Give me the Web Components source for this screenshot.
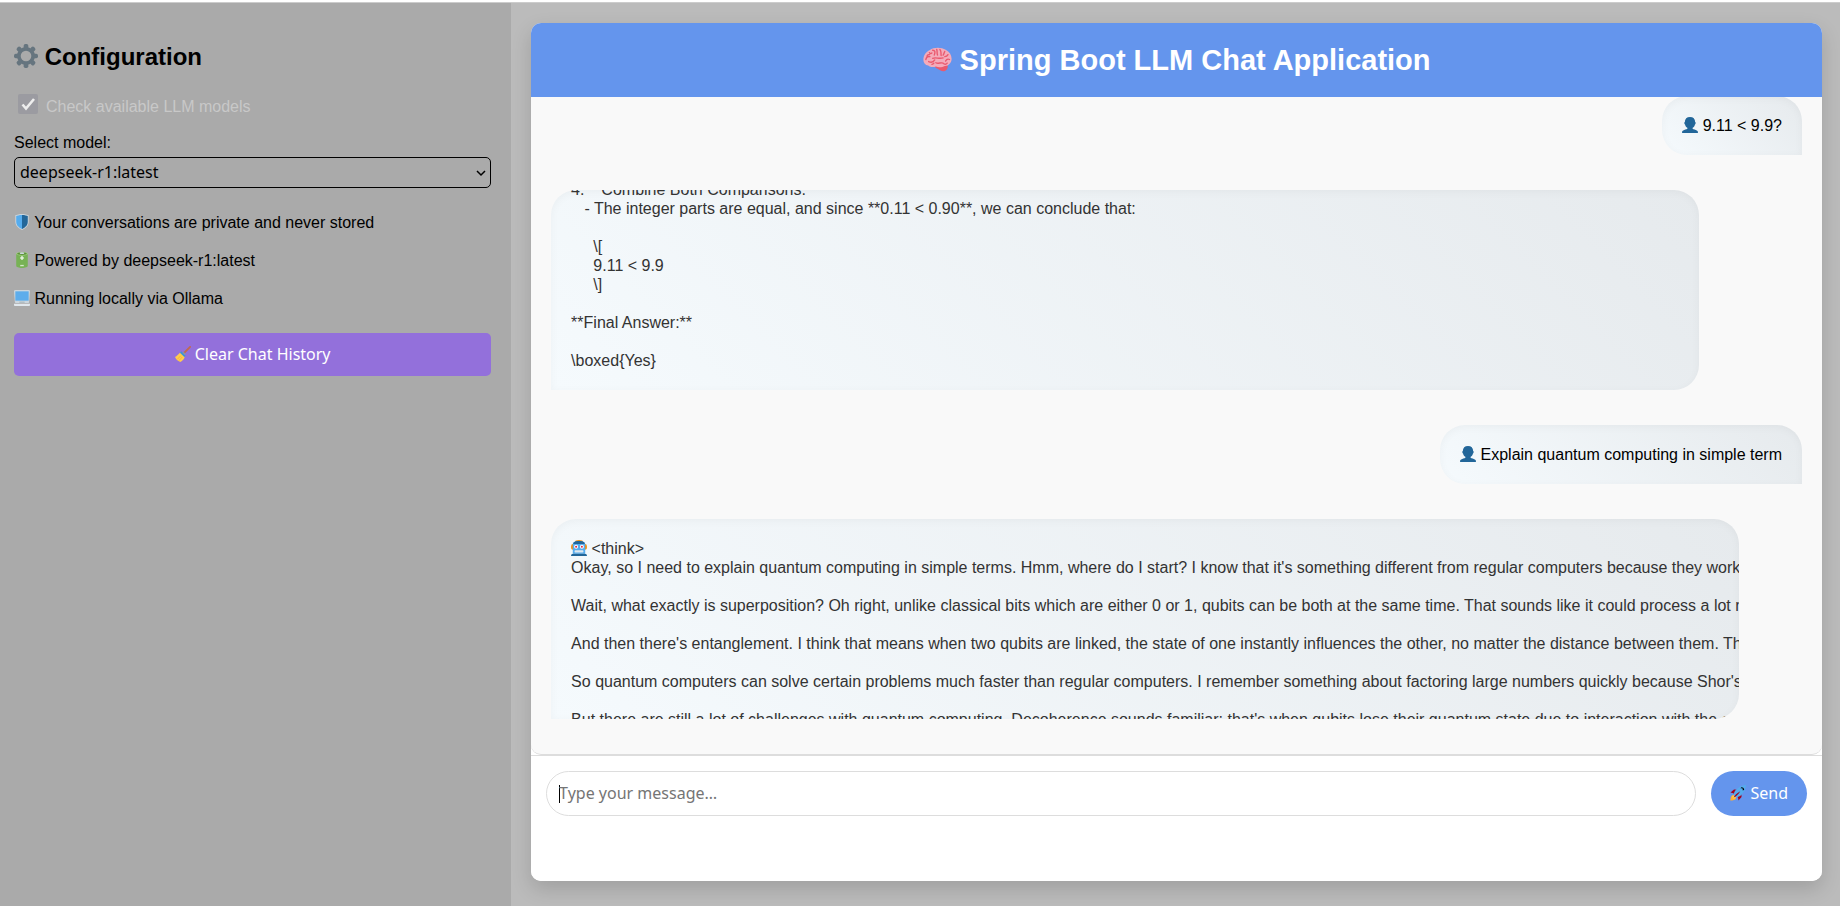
<!DOCTYPE html>
<html lang="en">
<head>
<meta charset="utf-8">
<title>Spring Boot LLM Chat Application</title>
<style>
  html, body { height: 100%; }
  body {
    margin: 0;
    background: #fff;
    color: #000;
    font: 16px/19px "Liberation Sans", Arial, sans-serif;
    overflow: hidden;
  }
</style>
</head>
<body>
<chat-app>
  <config-sidebar slot="sidebar"></config-sidebar>
  <chat-window>
    <chat-message from="user"><emoji-icon name="person"></emoji-icon> 9.11 &lt; 9.9?</chat-message>
    <chat-message from="bot" narrow at-end>4. **Combine Both Comparisons:**
   - The integer parts are equal, and since **0.11 &lt; 0.90**, we can conclude that:

     \[
     9.11 &lt; 9.9
     \]

**Final Answer:**

\boxed{Yes}</chat-message>
    <chat-message from="user"><emoji-icon name="person"></emoji-icon> Explain quantum computing in simple term</chat-message>
    <chat-message from="bot"><emoji-icon name="robot"></emoji-icon> &lt;think&gt;
Okay, so I need to explain quantum computing in simple terms. Hmm, where do I start? I know that it's something different from regular computers because they work with

Wait, what exactly is superposition? Oh right, unlike classical bits which are either 0 or 1, qubits can be both at the same time. That sounds like it could process a lot more

And then there's entanglement. I think that means when two qubits are linked, the state of one instantly influences the other, no matter the distance between them. That

So quantum computers can solve certain problems much faster than regular computers. I remember something about factoring large numbers quickly because Shor's algorithm

But there are still a lot of challenges with quantum computing. Decoherence sounds familiar; that's when qubits lose their quantum state due to interaction with the environment.</chat-message>
  </chat-window>
</chat-app>

<script>
const UI_FONT = '"Noto Sans", "Open Sans", sans-serif';

const ICONS = {
  gear: `<g fill="#66757f"><circle cx="18" cy="18" r="13.500"/>
    ${[0,45,90,135,180,225,270,315].map(a => `<rect x="14.500" y="0" width="7" height="8" rx="2.600" transform="rotate(${a} 18 18)"/>`).join('')}</g>
    <circle cx="18" cy="18" r="8" fill="#aaa"/>`,
  brain: `<path fill="#ea596e" d="M29.9 23.3c-2 .5-8 2-12 2-3 0-4 1.800-1 3.700 3.600 2.200 6 4 9.500 3.500 3.500-.6 5.600-5 3.500-9.200z"/>
    <path fill="#f4abba" d="M35.500 17c-.1-4.300-2.600-8.600-7.400-11C23.500 2.700 13.500 2.200 8.500 6.200 3.500 8.500.5 13 .5 18.500c0 3.500 2.500 6.500 6 7 2.500 2 6 2.500 9.500 1.300 4 1.200 8 .8 11-.8 4.500.3 8.600-4 8.500-9z"/>
    <g fill="none" stroke="#ea596e" stroke-width="1.700" stroke-linecap="round"><path d="M3.500 18c1-4 3-4 5-3.500M8 9.500c1 1.500 2 1.500 3 .5M7 20.500c3 1.500 6 .5 7.500-2M12 6.500c3 0 3.500 2 2 6M17 5.500c1 2 0 4 1 7M21 5.500c2 2 1 4 1.500 7.500M27 8c-1 2-1 3-2 4.500M31 12c-1 2-2 2.500-4 2.500M33 18c-2-1-4 0-5 2M12 16.500c4-1.500 8 1 13-.5M16 22c3 2 6-1 9 .5M11 24c1.500 0 2-1 2.500-1.500M5 14.500c0-2 1-3 3-2.500M30 22.500c-1 1.500-3 1.500-4 1"/></g>`,
  shield: `<path fill="#ccd6dd" d="M33 3s-7-3-15-3S3 3 3 3v15c0 12 15 18 15 18s15-6 15-18z"/>
    <path fill="#55acee" d="M18 33.900C15 32.500 5 27.300 5 18V4.400C6.800 3.700 12 2 18 2z"/>
    <path fill="#226699" d="M18 33.900C21 32.500 31 27.300 31 18V4.400C29.200 3.700 24 2 18 2z"/>`,
  battery: `<path fill="#77b255" d="M5 4v27c0 3 6 5 13 5s13-2 13-5V4z"/><ellipse cx="18" cy="4" rx="13" ry="4" fill="#a6d388"/>
    <ellipse cx="18" cy="4" rx="11" ry="2.600" fill="#5c913b"/><ellipse cx="18" cy="2.700" rx="5" ry="2" fill="#ccd6dd"/>
    <path stroke="#fff" stroke-width="2.500" d="M18 9v9M13.500 13.500h9"/><path fill="#d4e7c8" d="M14 29h8v3h-8z"/>`,
  laptop: `<path fill="#ccd6dd" d="M34 27a2 2 0 0 1-2 2H4a2 2 0 0 1-2-2L0 3a3 3 0 0 1 3-3h30a3 3 0 0 1 3 3z"/>
    <rect x="3" y="3" width="30" height="21" fill="#5dadec"/><path fill="#aebbc1" d="M12 26h12v3H12z"/>
    <path fill="#e1e8ed" d="M0 31h36v3a2 2 0 0 1-2 2H2a2 2 0 0 1-2-2z"/>`,
  broom: `<path stroke="#c1694f" stroke-width="4" stroke-linecap="round" d="M34 2 18 18"/>
    <path fill="#ffcc4d" d="m12 14 10 10c-1 5-5 9-10 12C6 34 2 30 0 25c4-3 8-6 12-11z"/>
    <path fill="#3b94d9" d="m14 12 10 10-3 3L11 15z"/><path stroke="#8899a6" stroke-width="3" d="m18 14 5 5"/>
    <path stroke="#f19020" stroke-width="1" d="m5 30 8-8M9 33l7-8"/>`,
  person: `<path fill="#269" d="M24 26.800v-2.700c2.700-1.600 4.500-4.400 5.200-7.400 2-.3 2-5.100.4-5.200C29.600 4 25.300 0 18 0S6.400 4 6.400 11.500c-1.600.1-1.600 4.900.4 5.200.7 3 2.500 5.800 5.200 7.400v2.700C6 28 0 30 0 34v1c0 .6.400 1 1 1h34c.6 0 1-.4 1-1v-1c0-4-6-6-12-7.200z"/>`,
  robot: `<ellipse cx="3.500" cy="15.500" rx="3.500" ry="6.500" fill="#f4900c"/><ellipse cx="32.500" cy="15.500" rx="3.500" ry="6.500" fill="#f4900c"/>
    <ellipse cx="18" cy="4" rx="9" ry="4" fill="#f4900c"/><path fill="#55acee" d="M4 9c0-4 6-7 14-7s14 3 14 7v22H4z"/>
    <path fill="#269" d="M6 5c5-4 19-4 24 0l1 4H5z"/><circle cx="11.500" cy="15" r="4.500" fill="#fff"/><circle cx="24.500" cy="15" r="4.500" fill="#fff"/>
    <circle cx="11.500" cy="15" r="2.300" fill="#dd2e44"/><circle cx="24.500" cy="15" r="2.300" fill="#dd2e44"/>
    <rect x="8" y="23" width="20" height="5" rx="1.500" fill="#e1e8ed"/><path fill="#226699" d="M0 36c0-3 2-5 5-5h26c3 0 5 2 5 5z"/>`,
  rocket: `<path fill="#a0041e" d="M1 17l8-7 16 1 1 16-7 8s.200-5.500-3-10c-3-4-9-7.500-15-8z"/>
    <path fill="#ffac33" d="M.973 35s-.036-7.979 2.985-11S15 21.187 15 21.187 14.999 29 11.999 32 .973 35 .973 35z"/>
    <circle cx="8.999" cy="27" r="4" fill="#ffcc4d"/>
    <path fill="#55acee" d="M35.999 0s-10 0-22 10c-6 5-6 14-4 16s11 2 16-4c10-12 10-22 10-22z"/>
    <path fill="#a0041e" d="M8 28c5-1 11-7 15-14-7 4-13 10-15 14z"/>
    <path fill="#000" d="M26 5a4 4 0 0 0-2 3c2-1 3-1 4 0s1 2 0 4a4 4 0 0 0 4-2c-1-3-3-5-6-5z"/>`
};

function define(name, html, setup) {
  const template = document.createElement('template');
  template.innerHTML = html;
  customElements.define(name, class extends HTMLElement {
    constructor() {
      super();
      this.attachShadow({ mode: 'open' }).append(template.content.cloneNode(true));
    }
    connectedCallback() { if (setup) setup(this, this.shadowRoot); }
  });
}

define('emoji-icon', `
  <style>
    :host { display: inline-block; width: 1em; height: 1em; vertical-align: -0.125em; white-space: normal; }
    svg { display: block; width: 100%; height: 100%; }
  </style>
  <svg viewBox="0 0 36 36" fill="none" aria-hidden="true"></svg>`,
  (host, root) => { root.querySelector('svg').innerHTML = ICONS[host.getAttribute('name')] || ''; });

define('chat-app', `
  <style>
    :host {
      box-sizing: border-box;
      display: grid;
      grid-template-columns: minmax(0, 5fr) minmax(0, 13fr);
      height: 100vh;
      border-top: 2px solid #fff;
      background: #bbb;
    }
    main { display: grid; padding: 20px 18px 25px 20px; border-top: 1px solid #ccc; min-height: 0; }
  </style>
  <slot name="sidebar"></slot>
  <main><slot></slot></main>`);

define('config-sidebar', `
  <style>
    :host { display: block; padding: 40px 20px 0 14px; background: #aaa; border-top: 1px solid #ccc; }
    h2 { margin: 0 0 24px; font-size: 24px; line-height: 27px; }
    .check { display: flex; gap: 8px; height: 22px; margin: 0 0 17px 4px; color: #c8c8c8; }
    .check span { align-self: flex-end; }
    input {
      appearance: none; margin: 0; width: 20px; height: 20px; border-radius: 2px;
      background: #9b9ba1 url('data:image/svg+xml,<svg xmlns="http://www.w3.org/2000/svg" viewBox="0 0 20 20"><path d="M4.500 10.500l3.500 4L16 5" fill="none" stroke="%23eee" stroke-width="2.600"/></svg>');
    }
    label { display: block; }
    select {
      appearance: none; display: block; box-sizing: border-box; width: 100%; height: 31px;
      margin: 5px 0 25px; padding: 0 5px 2px; border: 1px solid #000; border-radius: 5px;
      font: 16px ${UI_FONT}; color: #000;
      background: url('data:image/svg+xml,<svg xmlns="http://www.w3.org/2000/svg" width="10" height="8" viewBox="0 0 10 8"><path d="M1 2l4 4 4-4" fill="none" stroke="%23000" stroke-width="1.500"/></svg>') no-repeat right 4px center;
    }
    ul { list-style: none; margin: 0 0 25px; padding: 0; display: grid; gap: 19px; }
    button {
      display: block; width: 100%; height: 43px; padding: 0 0 2px; border: 0; border-radius: 5px;
      background: #9370db; color: #fff; font: 16px ${UI_FONT};
    }
  </style>
  <h2><emoji-icon name="gear"></emoji-icon> Configuration</h2>
  <label class="check"><input type="checkbox" checked disabled><span>Check available LLM models</span></label>
  <label for="model">Select model:</label>
  <select id="model"><option>deepseek-r1:latest</option></select>
  <ul>
    <li><emoji-icon name="shield"></emoji-icon> Your conversations are private and never stored</li>
    <li><emoji-icon name="battery"></emoji-icon> Powered by deepseek-r1:latest</li>
    <li><emoji-icon name="laptop"></emoji-icon> Running locally via Ollama</li>
  </ul>
  <button type="button"><emoji-icon name="broom"></emoji-icon> Clear Chat History</button>`);

define('chat-message', `
  <style>
    :host {
      box-sizing: border-box;
      display: flex;
      flex: none;
      overflow: hidden;
      white-space: pre;
      background: linear-gradient(45deg, #f5fafd, #e6eaed);
      box-shadow: inset 0 2px 8px rgba(0, 0, 0, 0.04);
    }
    :host([from="user"]) { align-self: flex-end; border-radius: 25px 25px 0 25px; }
    :host([from="bot"]) { width: 95%; height: 200px; border-radius: 25px 25px 25px 0; color: #333; }
    :host([narrow]) { width: calc(95% - 40px); }
    :host([at-end]) { align-items: flex-end; }
    div { padding: 20px; }
  </style>
  <div><slot></slot></div>`);

define('chat-composer', `
  <style>
    :host { display: block; }
    form { display: flex; gap: 15px; padding: 15px 15px 65px; border-top: 1px solid #ddd; background: #fff; }
    input {
      flex: 1; min-width: 0; box-sizing: border-box; height: 45px; padding: 0 12px 2px;
      border: 1px solid #ddd; border-radius: 25px; outline: 0; caret-color: transparent;
      background: linear-gradient(#000, #000) 12px center / 1px 18px no-repeat #fff;
      font: 16px ${UI_FONT};
    }
    input::placeholder { color: #757575; }
    button {
      height: 45px; padding: 0 19px 2px; border: 0; border-radius: 25px;
      background: #6495ed; color: #fff; font: 16px ${UI_FONT};
    }
  </style>
  <form>
    <input type="text" placeholder="Type your message…" aria-label="Message">
    <button type="button"><emoji-icon name="rocket"></emoji-icon> Send</button>
  </form>`);

define('chat-window', `
  <style>
    :host {
      display: flex; flex-direction: column; min-width: 0; min-height: 0;
      border-radius: 10px; overflow: hidden; background: #fff;
      box-shadow: 0 8px 20px rgba(0, 0, 0, 0.15);
    }
    h1 { margin: 0; padding: 20px; background: #6495ed; color: #fff; text-align: center; font-size: 29px; line-height: 34px; }
    section {
      flex: 1; min-height: 0; display: flex; flex-direction: column; justify-content: flex-end; gap: 35px;
      padding: 0 20px 35px; overflow: hidden; background: #f9f9f9;
      border-bottom: 1px solid #ddd; border-radius: 0 0 10px 10px;
    }
  </style>
  <h1><emoji-icon name="brain"></emoji-icon> Spring Boot LLM Chat Application</h1>
  <section><slot></slot></section>
  <chat-composer></chat-composer>`);
</script>
</body>
</html>
